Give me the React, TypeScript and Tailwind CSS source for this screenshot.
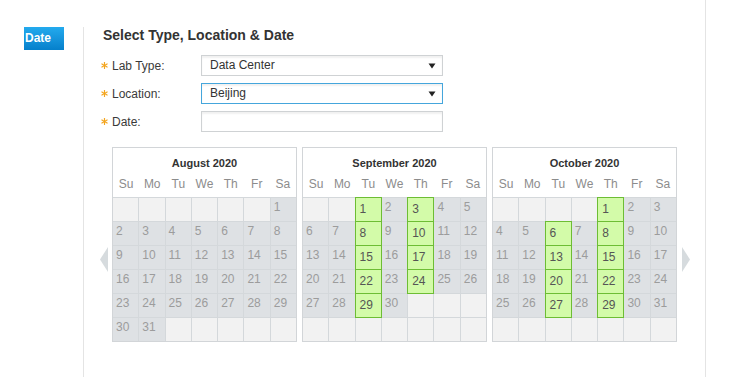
import React from "react";

type Month = {
  title: string;
  start: number;
  days: number;
  green: number[];
};

const months: Month[] = [
  { title: "August 2020", start: 6, days: 31, green: [] },
  { title: "September 2020", start: 2, days: 30, green: [1, 3, 8, 10, 15, 17, 22, 24, 29] },
  { title: "October 2020", start: 4, days: 31, green: [1, 6, 8, 13, 15, 20, 22, 27, 29] },
];

const weekDays = ["Su", "Mo", "Tu", "We", "Th", "Fr", "Sa"];

const Star = () => (
  <svg width="7" height="7" viewBox="0 0 7 7" className="mr-[4px] shrink-0">
    <g stroke="#f3a51f" strokeWidth="1.2" strokeLinecap="round">
      <line x1="3.5" y1="0.5" x2="3.5" y2="6.5" />
      <line x1="0.9" y1="2" x2="6.1" y2="5" />
      <line x1="0.9" y1="5" x2="6.1" y2="2" />
    </g>
  </svg>
);

const Caret = () => (
  <svg width="8" height="6" viewBox="0 0 8 6" className="absolute right-[6px] top-[7px]">
    <path d="M0.5 0.5 H7.5 L4 5.5 Z" fill="#222" />
  </svg>
);

const Calendar = ({ month }: { month: Month }) => {
  const cells: (number | null)[] = [];
  for (let i = 0; i < month.start; i++) cells.push(null);
  for (let d = 1; d <= month.days; d++) cells.push(d);
  while (cells.length < 42) cells.push(null);

  return (
    <div className="w-[185px] border border-[#d2d5d8] bg-white">
      <div className="h-[49px]">
        <div className="pt-[8px] text-center text-[11px] leading-[14px] font-bold text-[#333]">
          {month.title}
        </div>
        <div className="grid grid-cols-7 mt-[7px]">
          {weekDays.map((w) => (
            <div key={w} className="text-center text-[12px] leading-[14px] text-[#8c8c8c]">
              {w}
            </div>
          ))}
        </div>
      </div>
      <div className="grid grid-cols-7 gap-px bg-[#d4d8db] border-t border-[#d4d8db]">
        {cells.map((d, i) => {
          if (d === null) return <div key={i} className="h-[23px] bg-[#f2f2f2]" />;
          const isGreen = month.green.includes(d);
          return isGreen ? (
            <div
              key={i}
              className="relative z-10 h-[23px] bg-[#d3fba9] outline outline-1 outline-[#6dbd34] pl-[4px] pt-[4px] text-[12px] leading-[14px] text-[#555]"
            >
              {d}
            </div>
          ) : (
            <div key={i} className="h-[23px] bg-[#dee1e4] pl-[3px] pt-[2px] text-[12px] leading-[14px] text-[#9c9c9c]">
              {d}
            </div>
          );
        })}
      </div>
    </div>
  );
};

const FormRow = ({ label, children }: { label: string; children: React.ReactNode }) => (
  <div className="flex items-center h-[21px]">
    <div className="w-[100px] flex items-center text-[12px] text-[#3a3a3a]">
      <Star />
      {label}
    </div>
    {children}
  </div>
);

export default function App() {
  return (
    <div className="w-[751px] h-[377px] bg-white flex overflow-hidden font-['Liberation_Sans',Arial,sans-serif]">
      <div className="w-[83px] shrink-0 pt-[27px] pl-[24px]">
        <div className="w-[40px] h-[23px] bg-gradient-to-b from-[#23aaee] to-[#0580cb] text-white text-[12px] font-bold leading-[23px] pl-[1px]">
          Date
        </div>
      </div>

      <div className="w-[622px] shrink-0 mt-[27px] border-l border-[#e4e4e4] pl-[19px]">
        <h2 className="text-[14px] leading-[16px] font-bold text-[#333]">Select Type, Location &amp; Date</h2>

        <div className="mt-[12px] -ml-[2px] flex flex-col gap-[7px]">
          <FormRow label="Lab Type:">
            <div className="relative w-[242px] h-[21px] border border-[#cfd2d4] bg-white shadow-[inset_0_2px_2px_rgba(0,0,0,0.06)] pl-[8px] text-[12px] leading-[19px] text-[#333]">
              Data Center
              <Caret />
            </div>
          </FormRow>
          <FormRow label="Location:">
            <div className="relative w-[242px] h-[21px] border border-[#45a6dc] bg-white shadow-[inset_0_2px_2px_rgba(0,0,0,0.06)] pl-[8px] text-[12px] leading-[19px] text-[#333]">
              Beijing
              <Caret />
            </div>
          </FormRow>
          <FormRow label="Date:">
            <div className="w-[242px] h-[21px] border border-[#cfd2d4] bg-white shadow-[inset_0_2px_2px_rgba(0,0,0,0.06)]" />
          </FormRow>
        </div>

        <div className="mt-[15px] -ml-[3px] flex items-start">
          <svg width="8" height="25" viewBox="0 0 8 25" className="mt-[100px] mr-[4px]">
            <path d="M8 0 L0 12.5 L8 25 Z" fill="#d6dbde" />
          </svg>
          <div className="flex gap-[5px]">
            {months.map((m) => (
              <Calendar key={m.title} month={m} />
            ))}
          </div>
          <svg width="8" height="25" viewBox="0 0 8 25" className="mt-[100px] ml-[5px]">
            <path d="M0 0 L8 12.5 L0 25 Z" fill="#d6dbde" />
          </svg>
        </div>
      </div>

      <div className="w-px h-full bg-[#e4e4e4] shrink-0" />
    </div>
  );
}
